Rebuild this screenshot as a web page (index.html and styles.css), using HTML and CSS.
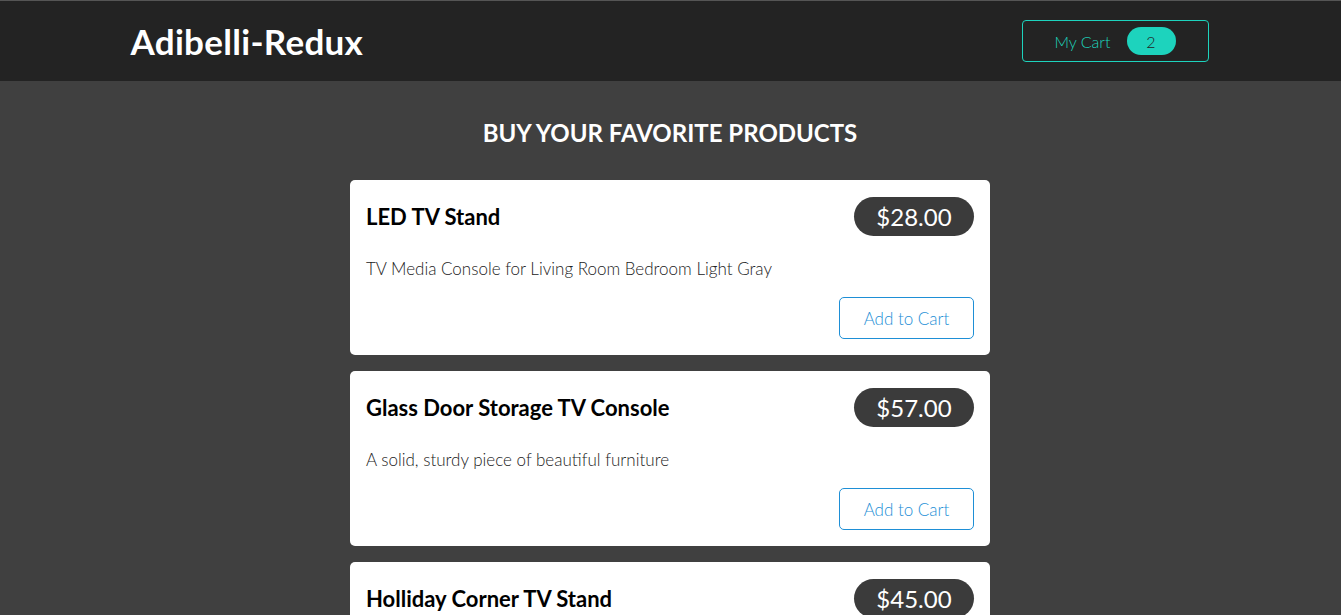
FILE: index.html
```html
<!DOCTYPE html>
<html>
<head>
<meta charset="utf-8">
<link rel="stylesheet" href="styles.css">
</head>
<body>
<header class="topbar">
  <div class="container bar-inner">
    <h1 class="brand">Adibelli-Redux</h1>
    <button class="cart-btn"><span class="cart-label">My Cart</span><span class="badge">2</span></button>
  </div>
</header>
<main class="main">
  <h2 class="heading">BUY YOUR FAVORITE PRODUCTS</h2>
  <ul class="products">
    <li class="card">
      <div class="card-head">
        <h3 class="title">LED TV Stand</h3>
        <span class="price">$28.00</span>
      </div>
      <p class="desc">TV Media Console for Living Room Bedroom Light Gray</p>
      <div class="actions"><button class="add-btn">Add to Cart</button></div>
    </li>
    <li class="card">
      <div class="card-head">
        <h3 class="title">Glass Door Storage TV Console</h3>
        <span class="price">$57.00</span>
      </div>
      <p class="desc">A solid, sturdy piece of beautiful furniture</p>
      <div class="actions"><button class="add-btn">Add to Cart</button></div>
    </li>
    <li class="card">
      <div class="card-head">
        <h3 class="title">Holliday Corner TV Stand</h3>
        <span class="price">$45.00</span>
      </div>
      <p class="desc">Corner TV stand for small spaces</p>
      <div class="actions"><button class="add-btn">Add to Cart</button></div>
    </li>
  </ul>
</main>
</body>
</html>
```

FILE: styles.css
```css
html, body {
  margin: 0;
  padding: 0;
}
body {
  background: #404040;
  font-family: "Lato", "Open Sans", sans-serif;
  border-top: 1px solid #555;
}
.topbar {
  background: #232323;
  height: 80px;
}
.container {
  width: 1080px;
  margin: 0 auto;
}
.bar-inner {
  display: flex;
  align-items: center;
  justify-content: space-between;
  height: 80px;
}
.brand {
  margin: 0;
  color: #fff;
  font-size: 35px;
  font-weight: 700;
  letter-spacing: 0.3px;
}
.cart-btn {
  width: 187px;
  height: 42px;
  margin-right: 2px;
  background: transparent;
  border: 1px solid #1dd3bd;
  border-radius: 4px;
  display: flex;
  align-items: center;
  justify-content: center;
  gap: 16px;
  font-family: inherit;
  padding: 0;
}
.cart-label {
  color: #1dd3bd;
  font-size: 16px;
  font-weight: 300;
}
.badge {
  background: #1dd3bd;
  color: #222;
  border-radius: 14px;
  width: 49px;
  height: 28px;
  display: flex;
  align-items: center;
  justify-content: center;
  font-size: 16px;
  font-weight: 300;
}
.main {
  display: flex;
  flex-direction: column;
  align-items: center;
  padding-right: 1px;
}
.heading {
  margin: 37px 0 32px;
  color: #fff;
  font-size: 24px;
  font-weight: 700;
  line-height: 30px;
}
.products {
  list-style: none;
  margin: 0;
  padding: 0;
  width: 640px;
  display: flex;
  flex-direction: column;
  gap: 16px;
}
.card {
  background: #fff;
  border-radius: 5px;
  padding: 17px 16px 16px;
}
.card-head {
  display: flex;
  justify-content: space-between;
  align-items: center;
}
.title {
  margin: 0;
  font-size: 22px;
  font-weight: 700;
  color: #000;
}
.price {
  background: #3b3b3b;
  color: #fff;
  border-radius: 20px;
  width: 120px;
  height: 39px;
  display: flex;
  align-items: center;
  justify-content: center;
  font-size: 24px;
  font-weight: 400;
}
.desc {
  margin: 22px 0 17px;
  font-size: 17px;
  font-weight: 300;
  color: #222;
  line-height: 22px;
}
.actions {
  display: flex;
  justify-content: flex-end;
}
.add-btn {
  width: 135px;
  height: 42px;
  background: #fff;
  border: 1px solid #1e8fd6;
  border-radius: 5px;
  color: #1e8fd6;
  font-family: inherit;
  font-size: 17px;
  font-weight: 300;
  padding: 0;
}
```
